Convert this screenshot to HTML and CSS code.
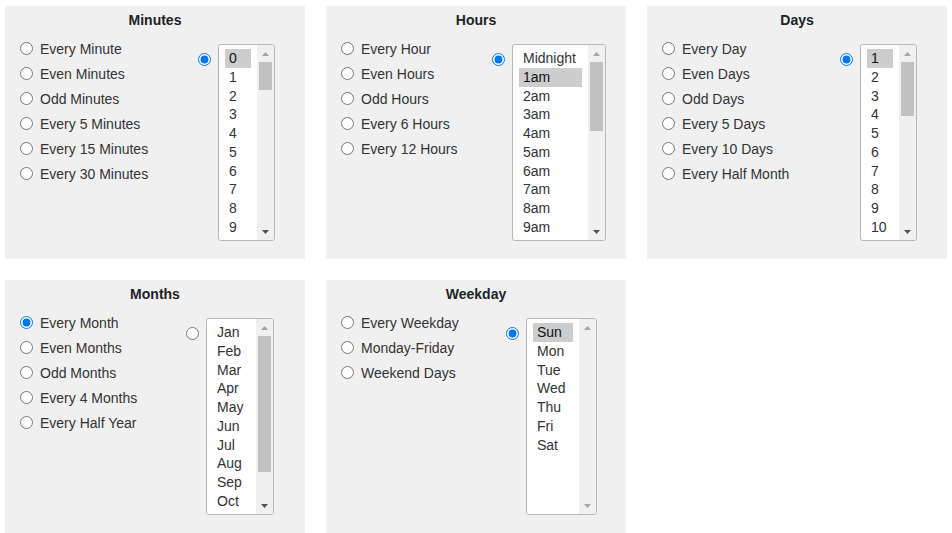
FILE: index.html
```html
<!DOCTYPE html>
<html lang="en">
<head>
<meta charset="utf-8">
<title>Cron schedule</title>
<link rel="stylesheet" href="styles.css">
</head>
<body>
<div class="grid">

  <section class="panel">
    <h2 class="title">Minutes</h2>
    <div class="body">
      <ul class="choices">
        <li><label class="choice"><input type="radio" name="min">Every Minute</label></li>
        <li><label class="choice"><input type="radio" name="min">Even Minutes</label></li>
        <li><label class="choice"><input type="radio" name="min">Odd Minutes</label></li>
        <li><label class="choice"><input type="radio" name="min">Every 5 Minutes</label></li>
        <li><label class="choice"><input type="radio" name="min">Every 15 Minutes</label></li>
        <li><label class="choice"><input type="radio" name="min">Every 30 Minutes</label></li>
      </ul>
      <div class="specific sp-min">
        <input type="radio" class="sp-radio" name="min" checked>
        <div class="listbox lb-min">
          <div class="list">
            <div class="opt sel">0</div><div class="opt">1</div><div class="opt">2</div><div class="opt">3</div><div class="opt">4</div><div class="opt">5</div><div class="opt">6</div><div class="opt">7</div><div class="opt">8</div><div class="opt">9</div>
          </div>
          <div class="sbar">
            <span class="btn"><svg width="7" height="4" viewBox="0 0 7 4"><path class="ar-off" d="M0 4L3.5 0L7 4Z"/></svg></span>
            <span class="thumb" style="height:28px"></span>
            <span class="track"></span>
            <span class="btn"><svg width="7" height="4" viewBox="0 0 7 4"><path class="ar-on" d="M0 0L3.5 4L7 0Z"/></svg></span>
          </div>
        </div>
      </div>
    </div>
  </section>

  <section class="panel">
    <h2 class="title">Hours</h2>
    <div class="body">
      <ul class="choices">
        <li><label class="choice"><input type="radio" name="hour">Every Hour</label></li>
        <li><label class="choice"><input type="radio" name="hour">Even Hours</label></li>
        <li><label class="choice"><input type="radio" name="hour">Odd Hours</label></li>
        <li><label class="choice"><input type="radio" name="hour">Every 6 Hours</label></li>
        <li><label class="choice"><input type="radio" name="hour">Every 12 Hours</label></li>
      </ul>
      <div class="specific sp-hour">
        <input type="radio" class="sp-radio" name="hour" checked>
        <div class="listbox lb-hour">
          <div class="list">
            <div class="opt">Midnight</div><div class="opt sel">1am</div><div class="opt">2am</div><div class="opt">3am</div><div class="opt">4am</div><div class="opt">5am</div><div class="opt">6am</div><div class="opt">7am</div><div class="opt">8am</div><div class="opt">9am</div>
          </div>
          <div class="sbar">
            <span class="btn"><svg width="7" height="4" viewBox="0 0 7 4"><path class="ar-off" d="M0 4L3.5 0L7 4Z"/></svg></span>
            <span class="thumb" style="height:69px"></span>
            <span class="track"></span>
            <span class="btn"><svg width="7" height="4" viewBox="0 0 7 4"><path class="ar-on" d="M0 0L3.5 4L7 0Z"/></svg></span>
          </div>
        </div>
      </div>
    </div>
  </section>

  <section class="panel">
    <h2 class="title">Days</h2>
    <div class="body">
      <ul class="choices">
        <li><label class="choice"><input type="radio" name="day">Every Day</label></li>
        <li><label class="choice"><input type="radio" name="day">Even Days</label></li>
        <li><label class="choice"><input type="radio" name="day">Odd Days</label></li>
        <li><label class="choice"><input type="radio" name="day">Every 5 Days</label></li>
        <li><label class="choice"><input type="radio" name="day">Every 10 Days</label></li>
        <li><label class="choice"><input type="radio" name="day">Every Half Month</label></li>
      </ul>
      <div class="specific sp-day">
        <input type="radio" class="sp-radio" name="day" checked>
        <div class="listbox lb-day">
          <div class="list">
            <div class="opt sel">1</div><div class="opt">2</div><div class="opt">3</div><div class="opt">4</div><div class="opt">5</div><div class="opt">6</div><div class="opt">7</div><div class="opt">8</div><div class="opt">9</div><div class="opt">10</div>
          </div>
          <div class="sbar">
            <span class="btn"><svg width="7" height="4" viewBox="0 0 7 4"><path class="ar-off" d="M0 4L3.5 0L7 4Z"/></svg></span>
            <span class="thumb" style="height:54px"></span>
            <span class="track"></span>
            <span class="btn"><svg width="7" height="4" viewBox="0 0 7 4"><path class="ar-on" d="M0 0L3.5 4L7 0Z"/></svg></span>
          </div>
        </div>
      </div>
    </div>
  </section>

  <section class="panel">
    <h2 class="title">Months</h2>
    <div class="body">
      <ul class="choices">
        <li><label class="choice"><input type="radio" name="month" checked>Every Month</label></li>
        <li><label class="choice"><input type="radio" name="month">Even Months</label></li>
        <li><label class="choice"><input type="radio" name="month">Odd Months</label></li>
        <li><label class="choice"><input type="radio" name="month">Every 4 Months</label></li>
        <li><label class="choice"><input type="radio" name="month">Every Half Year</label></li>
      </ul>
      <div class="specific sp-month">
        <input type="radio" class="sp-radio" name="month">
        <div class="listbox lb-month">
          <div class="list">
            <div class="opt">Jan</div><div class="opt">Feb</div><div class="opt">Mar</div><div class="opt">Apr</div><div class="opt">May</div><div class="opt">Jun</div><div class="opt">Jul</div><div class="opt">Aug</div><div class="opt">Sep</div><div class="opt">Oct</div>
          </div>
          <div class="sbar">
            <span class="btn"><svg width="7" height="4" viewBox="0 0 7 4"><path class="ar-off" d="M0 4L3.5 0L7 4Z"/></svg></span>
            <span class="thumb" style="height:136px"></span>
            <span class="track"></span>
            <span class="btn"><svg width="7" height="4" viewBox="0 0 7 4"><path class="ar-on" d="M0 0L3.5 4L7 0Z"/></svg></span>
          </div>
        </div>
      </div>
    </div>
  </section>

  <section class="panel">
    <h2 class="title">Weekday</h2>
    <div class="body">
      <ul class="choices">
        <li><label class="choice"><input type="radio" name="wd">Every Weekday</label></li>
        <li><label class="choice"><input type="radio" name="wd">Monday-Friday</label></li>
        <li><label class="choice"><input type="radio" name="wd">Weekend Days</label></li>
      </ul>
      <div class="specific sp-week">
        <input type="radio" class="sp-radio" name="wd" checked>
        <div class="listbox lb-week">
          <div class="list">
            <div class="opt sel">Sun</div><div class="opt">Mon</div><div class="opt">Tue</div><div class="opt">Wed</div><div class="opt">Thu</div><div class="opt">Fri</div><div class="opt">Sat</div>
          </div>
          <div class="sbar">
            <span class="btn"><svg width="7" height="4" viewBox="0 0 7 4"><path class="ar-off" d="M0 4L3.5 0L7 4Z"/></svg></span>
            <span class="track"></span>
            <span class="btn"><svg width="7" height="4" viewBox="0 0 7 4"><path class="ar-off" d="M0 0L3.5 4L7 0Z"/></svg></span>
          </div>
        </div>
      </div>
    </div>
  </section>

</div>
</body>
</html>
```

FILE: styles.css
```css
html, body {
  margin: 0;
}

html {
  overflow: hidden;
}

body {
  padding: 6px 5px 0;
  height: 533px;
  box-sizing: border-box;
  font-family: "Liberation Sans", Arial, sans-serif;
  font-size: 14px;
  color: #333;
  background: #fff;
}

.grid {
  display: grid;
  grid-template-columns: repeat(3, 300px);
  grid-auto-rows: 253px;
  gap: 21px;
}

.panel {
  background: #f0f0f0;
  padding-top: 6px;
  box-sizing: border-box;
  overflow: hidden;
}

.title {
  margin: 0;
  font-size: 14px;
  font-weight: bold;
  line-height: 16px;
  text-align: center;
  color: #222;
}

.body {
  display: flex;
  align-items: flex-start;
  margin-top: 8px;
}

.choices {
  list-style: none;
  margin: 0;
  padding: 0 0 0 15px;
}

.choice {
  display: flex;
  align-items: center;
  height: 25px;
  white-space: nowrap;
}

.choice input {
  margin: 0 7px 0 0;
  width: 13px;
  height: 13px;
}

.specific {
  margin-left: auto;
  display: flex;
  align-items: flex-start;
}

.sp-min, .sp-day { margin-right: 30px; }
.sp-hour { margin-right: 20px; }
.sp-month { margin-right: 31px; }
.sp-week { margin-right: 29px; }

.sp-radio {
  margin: 17px 7px 0 0;
  width: 13px;
  height: 13px;
}

.listbox {
  margin-top: 8px;
  height: 197px;
  border: 1px solid #b8b8b8;
  border-radius: 3px;
  background: #fff;
  box-sizing: border-box;
  display: flex;
  overflow: hidden;
}

.lb-min, .lb-day { width: 57px; }
.lb-hour { width: 94px; }
.lb-month { width: 68px; }
.lb-week { width: 71px; }

.list {
  flex: 1;
  min-width: 0;
  padding: 4px 6px 0;
  overflow: hidden;
}

.opt {
  height: 18.75px;
  line-height: 18.75px;
  padding-left: 4px;
  white-space: nowrap;
  color: #333;
}

.opt.sel {
  background: #cdcdcd;
  color: #111;
}

.sbar {
  width: 17px;
  flex: none;
  background: #f0f0f0;
  display: flex;
  flex-direction: column;
}

.btn {
  height: 17px;
  flex: none;
  display: flex;
  align-items: center;
  justify-content: center;
}

.btn svg {
  display: block;
}

.ar-off { fill: #a3a3a3; }
.ar-on { fill: #505050; }

.thumb {
  flex: none;
  margin: 0 2px;
  background: #c1c1c1;
}

.track {
  flex: 1;
}
```
